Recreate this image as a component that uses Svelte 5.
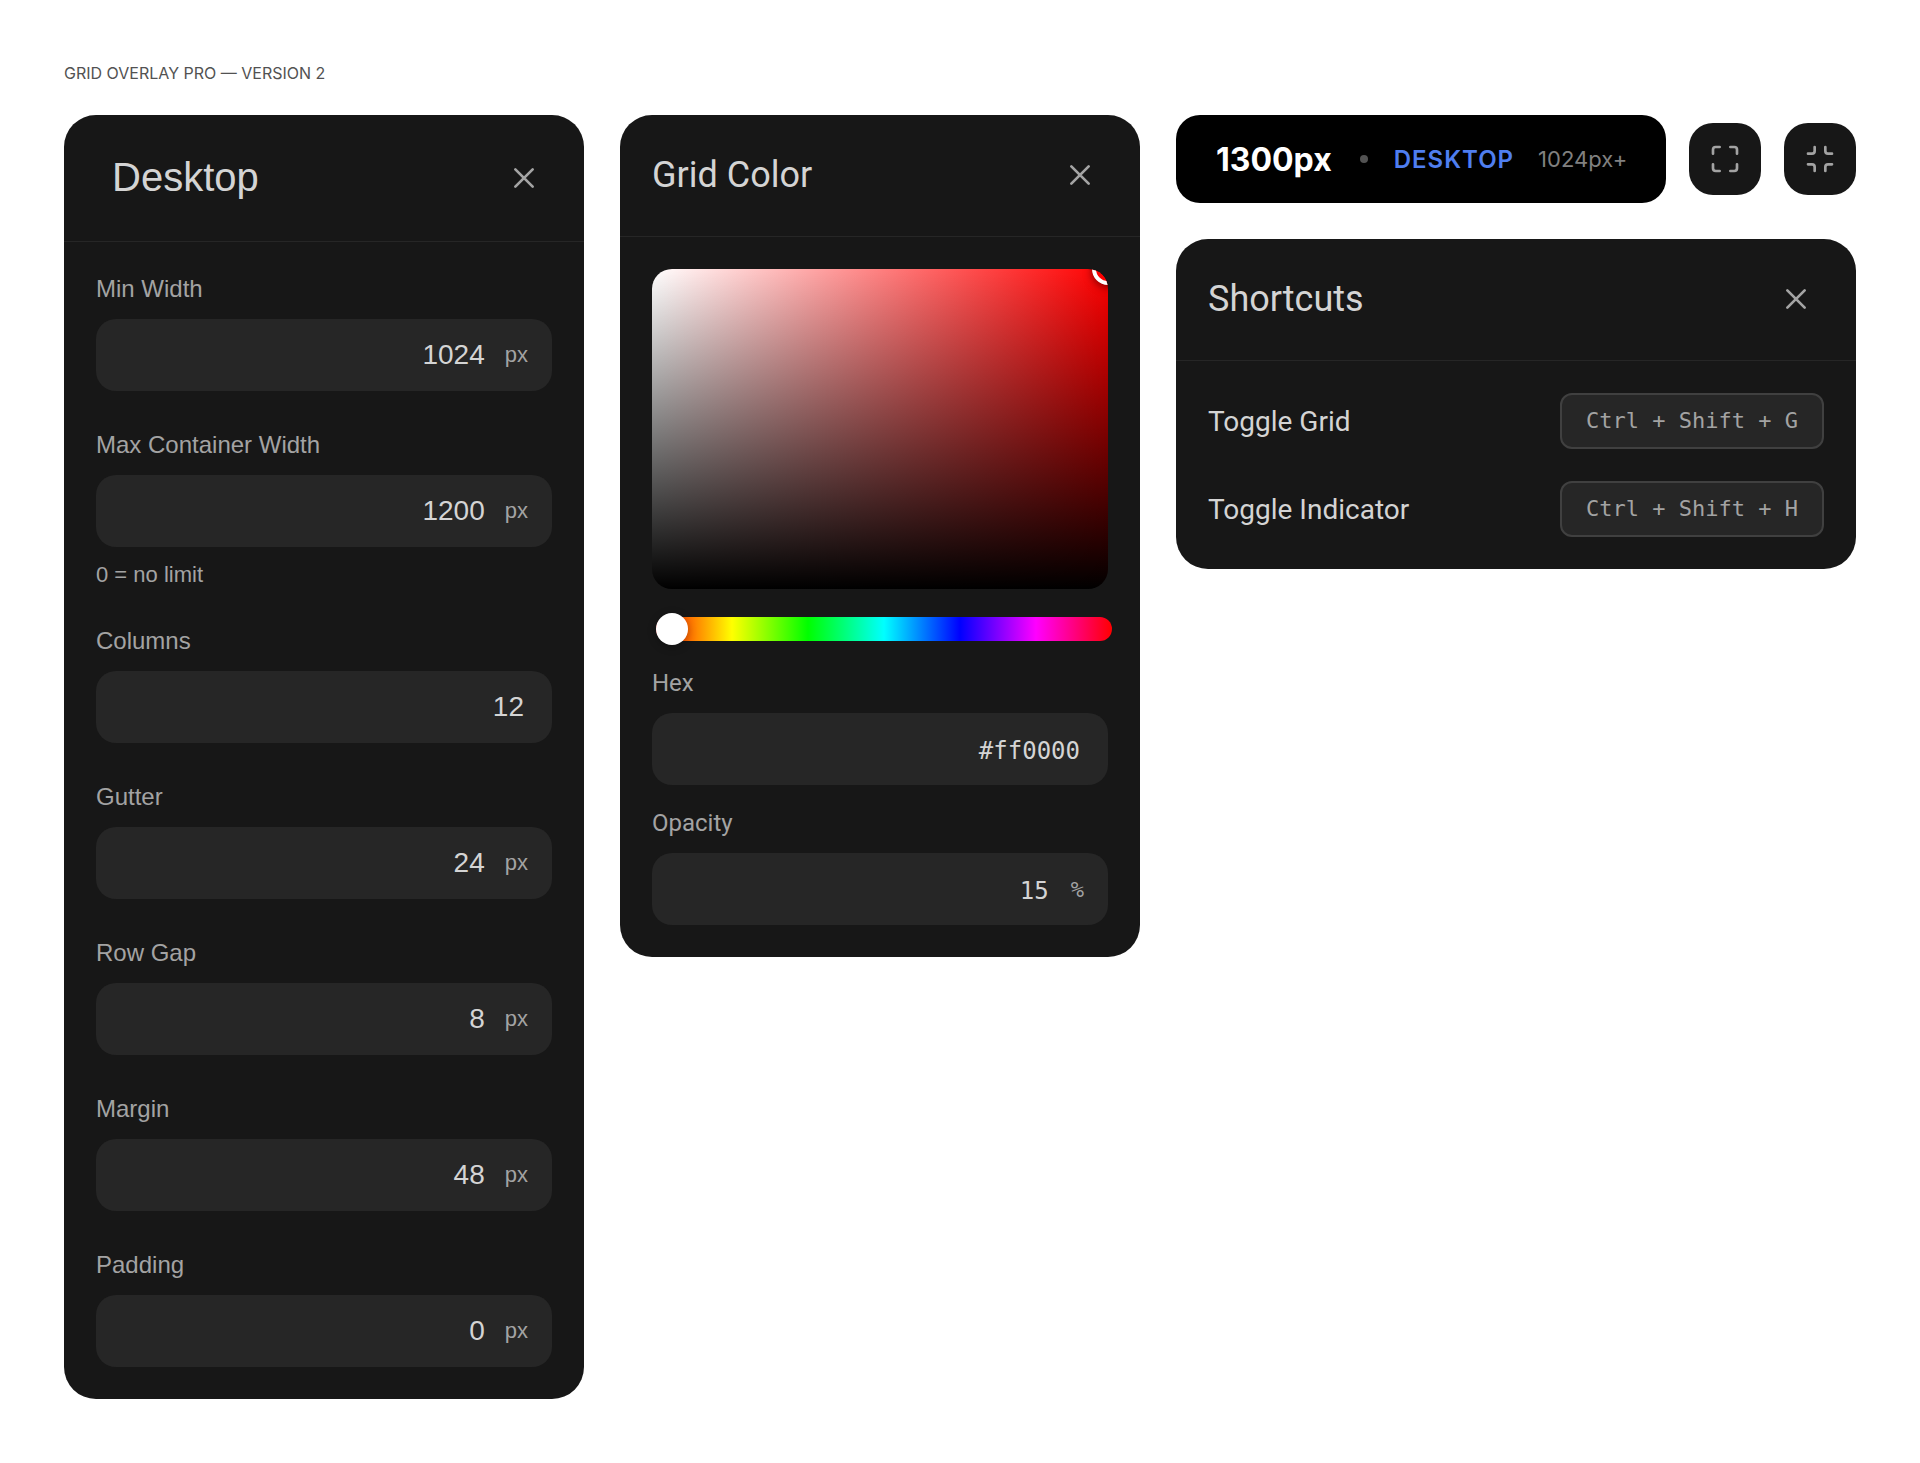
<script>
	const fields = [
		{ label: 'Min Width', value: '1024', unit: 'px' },
		{ label: 'Max Container Width', value: '1200', unit: 'px', hint: '0 = no limit' },
		{ label: 'Columns', value: '12' },
		{ label: 'Gutter', value: '24', unit: 'px' },
		{ label: 'Row Gap', value: '8', unit: 'px' },
		{ label: 'Margin', value: '48', unit: 'px' },
		{ label: 'Padding', value: '0', unit: 'px' }
	];

	const shortcuts = [
		{ label: 'Toggle Grid', keys: 'Ctrl + Shift + G' },
		{ label: 'Toggle Indicator', keys: 'Ctrl + Shift + H' }
	];
</script>

{#snippet closeIcon()}
	<button class="close" aria-label="Close">
		<svg width="32" height="32" viewBox="0 0 24 24" fill="none" stroke="currentColor" stroke-width="2" stroke-linecap="round">
			<path d="M18.5 5.5l-13 13M5.5 5.5l13 13" />
		</svg>
	</button>
{/snippet}

<div class="page">
	<p class="caption">GRID OVERLAY PRO — VERSION 2</p>

	<div class="columns">
		<!-- Breakpoint panel -->
		<section class="panel desktop">
			<header class="panel-head">
				<h2>Desktop</h2>
				{@render closeIcon()}
			</header>
			<div class="panel-body">
				{#each fields as field}
					<div class="field">
						<div class="label">{field.label}</div>
						<div class="input" class:no-unit={!field.unit}>
							<span class="value">{field.value}</span>
							{#if field.unit}<span class="unit">{field.unit}</span>{/if}
						</div>
						{#if field.hint}<div class="hint">{field.hint}</div>{/if}
					</div>
				{/each}
			</div>
		</section>

		<!-- Color picker -->
		<section class="panel color">
			<header class="panel-head">
				<h2>Grid Color</h2>
				{@render closeIcon()}
			</header>
			<div class="panel-body">
				<div class="sv">
					<div class="sv-knob"></div>
				</div>
				<div class="hue">
					<div class="hue-knob"></div>
				</div>
				<div class="field">
					<div class="label">Hex</div>
					<div class="input mono">
						<span class="value">#ff0000</span>
					</div>
				</div>
				<div class="field">
					<div class="label">Opacity</div>
					<div class="input mono">
						<span class="value">15</span>
						<span class="unit">%</span>
					</div>
				</div>
			</div>
		</section>

		<div class="side">
			<div class="toolbar">
				<div class="indicator">
					<span class="width">1300px</span>
					<span class="dot"></span>
					<span class="bp">DESKTOP</span>
					<span class="range">1024px+</span>
				</div>
				<button class="tool" aria-label="Enter fullscreen">
					<svg width="32" height="32" viewBox="0 0 24 24" fill="none" stroke="currentColor" stroke-width="2" stroke-linecap="round" stroke-linejoin="round">
						<path d="M8 3H5a2 2 0 0 0-2 2v3M21 8V5a2 2 0 0 0-2-2h-3M3 16v3a2 2 0 0 0 2 2h3M16 21h3a2 2 0 0 0 2-2v-3" />
					</svg>
				</button>
				<button class="tool" aria-label="Exit fullscreen">
					<svg width="32" height="32" viewBox="0 0 24 24" fill="none" stroke="currentColor" stroke-width="2" stroke-linecap="round" stroke-linejoin="round">
						<path d="M8 3v3a2 2 0 0 1-2 2H3M21 8h-3a2 2 0 0 1-2-2V3M3 16h3a2 2 0 0 1 2 2v3M16 21v-3a2 2 0 0 1 2-2h3" />
					</svg>
				</button>
			</div>

			<section class="panel shortcuts">
				<header class="panel-head">
					<h2>Shortcuts</h2>
					{@render closeIcon()}
				</header>
				<div class="panel-body">
					{#each shortcuts as item}
						<div class="shortcut">
							<span class="shortcut-label">{item.label}</span>
							<kbd>{item.keys}</kbd>
						</div>
					{/each}
				</div>
			</section>
		</div>
	</div>
</div>

<style>
	:global(body) {
		margin: 0;
		background: #fff;
	}

	.page {
		padding: 64px;
		height: 1463px;
		box-sizing: border-box;
		font-family: Roboto, sans-serif;
	}

	.caption {
		margin: 0 0 32px;
		font-family: Inter, sans-serif;
		font-size: 16px;
		line-height: 19px;
		color: #525252;
	}

	.columns {
		display: flex;
		align-items: flex-start;
		gap: 36px;
	}

	.panel {
		width: 520px;
		background: #171717;
		border-radius: 32px;
		overflow: hidden;
	}

	.panel-head {
		display: flex;
		align-items: center;
		justify-content: space-between;
		padding: 32px 32px 33px;
		border-bottom: 1px solid #262626;
	}

	.panel-head h2 {
		margin: 0;
		font-size: 36px;
		line-height: 56px;
		font-weight: 400;
		color: #d4d4d4;
	}

	.close {
		display: flex;
		align-items: center;
		justify-content: center;
		width: 56px;
		height: 56px;
		padding: 0;
		background: none;
		border: none;
		color: #a3a3a3;
	}

	.panel-body {
		padding: 32px;
	}

	.label {
		margin-bottom: 15px;
		font-size: 24px;
		line-height: 30px;
		color: #a3a3a3;
	}

	.input {
		display: flex;
		align-items: center;
		justify-content: flex-end;
		gap: 20px;
		height: 72px;
		padding-right: 24px;
		background: #262626;
		border-radius: 20px;
	}

	.input.no-unit {
		padding-right: 28px;
	}

	.value {
		font-size: 28px;
		color: #d4d4d4;
	}

	.unit {
		font-size: 22px;
		color: #a3a3a3;
	}

	/* Desktop panel is set in the Arial metric face */
	.desktop {
		font-family: 'Liberation Sans', Arial, sans-serif;
	}

	.desktop .panel-head {
		padding: 35px 32px 35px 48px;
	}

	.desktop .panel-head h2 {
		margin-bottom: 2px;
		font-size: 40px;
		line-height: 54px;
		font-family: 'Liberation Sans', Arial, sans-serif;
	}

	.desktop .field + .field {
		margin-top: 39px;
	}

	.hint {
		margin-top: 16px;
		font-size: 22px;
		line-height: 24px;
		color: #a3a3a3;
	}

	.sv {
		position: relative;
		height: 320px;
		border-radius: 20px;
		overflow: hidden;
		background:
			linear-gradient(to bottom, transparent, #000),
			linear-gradient(to right, #fff, #f00);
	}

	.sv-knob {
		position: absolute;
		top: -16px;
		right: -16px;
		width: 24px;
		height: 24px;
		border: 4px solid #fff;
		border-radius: 50%;
		background: #f00;
		box-shadow: 0 2px 8px rgba(0, 0, 0, 0.5);
	}

	.hue {
		position: relative;
		width: 456px;
		height: 24px;
		margin: 28px 0 27px 4px;
		border-radius: 12px;
		background: linear-gradient(to right, #f00 0%, #ff0 16.66%, #0f0 33.33%, #0ff 50%, #00f 66.66%, #f0f 83.33%, #f00 100%);
	}

	.hue-knob {
		position: absolute;
		top: -4px;
		left: 0;
		width: 32px;
		height: 32px;
		border-radius: 50%;
		background: #fff;
		box-shadow: 0 2px 8px rgba(0, 0, 0, 0.3);
	}

	.color .field + .field {
		margin-top: 23px;
	}

	.mono {
		gap: 22px;
		padding-right: 28px;
	}

	.mono .value {
		padding-top: 4px;
		font-family: 'DejaVu Sans Mono', monospace;
		font-size: 24px;
	}

	.mono .unit {
		font-family: 'DejaVu Sans Mono', monospace;
		font-size: 22px;
		margin-right: -4px;
	}

	.side {
		display: flex;
		flex-direction: column;
		gap: 36px;
		width: 680px;
	}

	.toolbar {
		display: flex;
		align-items: center;
		gap: 23px;
	}

	.indicator {
		display: flex;
		align-items: center;
		flex: 1;
		min-width: 0;
		height: 88px;
		padding: 0 0 0 40px;
		box-sizing: border-box;
		background: #000;
		border-radius: 24px;
		font-family: Inter, sans-serif;
		white-space: nowrap;
	}

	.width {
		font-size: 32px;
		font-weight: 700;
		color: #fff;
	}

	.dot {
		width: 8px;
		height: 8px;
		margin: 0 26px 0 28px;
		border-radius: 50%;
		background: #525252;
	}

	.bp {
		font-size: 24px;
		font-weight: 600;
		letter-spacing: 1px;
		color: #4f7ef0;
	}

	.range {
		margin-left: 24px;
		font-size: 22px;
		color: #808080;
	}

	.tool {
		display: flex;
		align-items: center;
		justify-content: center;
		flex: none;
		width: 72px;
		height: 72px;
		padding: 0;
		background: #171717;
		border: none;
		border-radius: 24px;
		color: #a3a3a3;
	}

	.shortcuts {
		width: 680px;
	}

	.shortcut {
		display: flex;
		align-items: center;
		justify-content: space-between;
	}

	.shortcut + .shortcut {
		margin-top: 32px;
	}

	.shortcut-label {
		font-size: 28px;
		color: #d4d4d4;
	}

	kbd {
		padding: 12px 24px;
		background: #262626;
		border: 2px solid #404040;
		border-radius: 12px;
		font-family: 'DejaVu Sans Mono', monospace;
		font-size: 22px;
		line-height: 28px;
		color: #a3a3a3;
	}
</style>
